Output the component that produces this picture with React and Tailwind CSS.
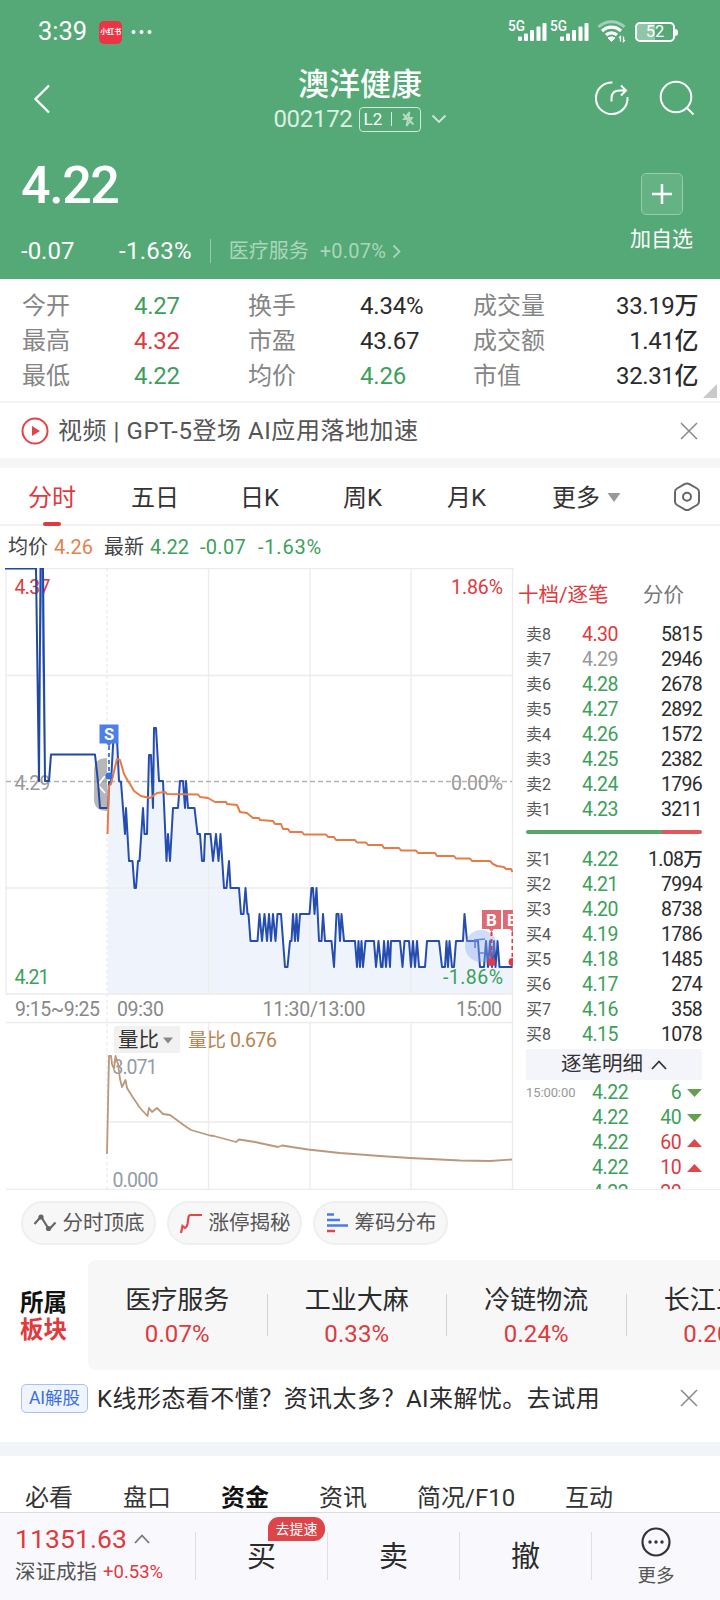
import React from 'react';

const GRID = '#ececec';

const stats = [
  ['今开', '4.27', 'text-[#3d9f5b]', '换手', '4.34%', 'text-[#2b2b2b]', '成交量', '33.19万'],
  ['最高', '4.32', 'text-[#dc3b40]', '市盈', '43.67', 'text-[#2b2b2b]', '成交额', '1.41亿'],
  ['最低', '4.22', 'text-[#3d9f5b]', '均价', '4.26', 'text-[#3d9f5b]', '市值', '32.31亿'],
];

const asks = [
  ['卖8', '4.30', '5815', 'text-[#dc3b40]'],
  ['卖7', '4.29', '2946', 'text-[#999999]'],
  ['卖6', '4.28', '2678', 'text-[#3d9f5b]'],
  ['卖5', '4.27', '2892', 'text-[#3d9f5b]'],
  ['卖4', '4.26', '1572', 'text-[#3d9f5b]'],
  ['卖3', '4.25', '2382', 'text-[#3d9f5b]'],
  ['卖2', '4.24', '1796', 'text-[#3d9f5b]'],
  ['卖1', '4.23', '3211', 'text-[#3d9f5b]'],
];

const bids = [
  ['买1', '4.22', '1.08万', 'text-[#3d9f5b]'],
  ['买2', '4.21', '7994', 'text-[#3d9f5b]'],
  ['买3', '4.20', '8738', 'text-[#3d9f5b]'],
  ['买4', '4.19', '1786', 'text-[#3d9f5b]'],
  ['买5', '4.18', '1485', 'text-[#3d9f5b]'],
  ['买6', '4.17', '274', 'text-[#3d9f5b]'],
  ['买7', '4.16', '358', 'text-[#3d9f5b]'],
  ['买8', '4.15', '1078', 'text-[#3d9f5b]'],
];

const ticks = [
  ['15:00:00', '4.22', '6', false],
  ['', '4.22', '40', false],
  ['', '4.22', '60', true],
  ['', '4.22', '10', true],
  ['', '4.22', '20', true],
];

const sectors = [
  ['医疗服务', '0.07%'],
  ['工业大麻', '0.33%'],
  ['冷链物流', '0.24%'],
  ['长江三角', '0.20%'],
];

const PRE_MARKET = '5,567.5 36,567.5 39,780 40.5,567.5 43,567.5 45,780 49,780 51,753.5 95,753.5 98,781 100,807 108,807';

const PRICE =
  '108,807 109,781 111,781 114,727 116.5,727 119,780 121,781 125,833 126,807 129,860 132.5,860 134.5,887 136,887 138,860 139.5,860 143,807 144.5,833 147,833 149,754 151,754 153,807 154,727 156,727 159,780 163,780 166.5,860 168,833 170,860 173,807 178,807 180,780 183,780 185,807 186,780 188,807 194.5,807 197.5,833 200,833 202,860 204,860 205,833 210.5,833 213,860 216,833 218.5,860 220.5,833 224,887 226.5,887 229,860 230.5,887 239,887 241,913 243.5,913 245.5,887 247.5,913 248.5,913 250.5,940 257.5,940 259.5,913 262,940 264.5,913 267,940 269,913 271,940 273,913 275.5,940 277.5,913 281,913 285,966 287.5,966 290,940 291.5,940 293,913 295,940 296.5,913 298,940 300,913 309.5,913 311.5,887 313,887 314.5,913 316.5,887 319,940 321.5,940 323,913 325,940 331.5,940 334,966 336.5,913 338.5,913 340,940 341.5,913 344,940 355,940 357,966 358.5,940 360,966 361.5,940 363,966 365.5,940 374,940 376,966 378.5,940 381,966 382.5,966 384,940 386,966 388,940 390,966 391,940 400,940 402.5,966 404.5,940 409,940 411,966 413,940 415,966 417,940 419,966 425,966 427,940 439,940 442,966 445,966 446.5,940 448,966 449.5,940 452,966 454,966 456,940 463,940 464.5,913 467,940 478,940 480,966 484,966 486,940 488,966 490,940 492,966 494,940 495.5,966 497.5,940 499.5,966 512.5,966';

const AVERAGE =
  '107.5,833 109,785 111,783 117,758 120,759 124,773 128,780 130,783 134,790 141,795 150,797 157,792 165,791 167,793 198,793.5 200,796 208,797 215,801 226,801 227,803 237,804 240,811 247,812 253,817 259,817 260,819 273,820 275,823 281,823 283,828 288,828 290,831 302,831 304,833.5 326,833.5 328,836 334,836 336,839 355,839 357,841.5 366,841.5 368,844 382,844 384,847 399,847 401,849.5 416,849.5 418,852 435,852 437,855 454,855 456,857.5 470,857.5 472,860 490,860 493,863 497,865 504,866 506,868 511,868 512.5,871';

const VOLUME_RATIO =
  '107,1153 109,1055 111,1055 112,1063 114,1068 115.5,1055 118,1063 120,1078 122,1086 125.5,1079 127,1087 132,1095 140,1107 147.5,1115 149,1107 152,1111 157,1107 163,1113 170,1114 185,1125 191,1129 198,1131 210,1134.5 214,1135 236,1141 239,1138.5 255,1141 278,1146 282,1144.5 308,1148.5 340,1152 380,1155 410,1157 460,1159.5 490,1160 512,1158.5';

function CloseIcon() {
  return (
    <svg width="18" height="18" fill="none" stroke="#888888" strokeWidth="1.5" className="ml-auto">
      <path d="m1 1 16 16M17 1 1 17" />
    </svg>
  );
}

function UpIcon({ className }) {
  return (
    <svg width="16" height="10" fill="none" stroke="currentColor" strokeWidth="1.800" className={className}>
      <path d="m1 9 7-7.500L15 9" />
    </svg>
  );
}

function Signal() {
  return (
    <svg width="40" height="24" viewBox="0 0 40 24" className="overflow-visible text-white">
      <text x="0" y="10.500" fontSize="14.500" fontWeight="500" fill="currentColor" textLength="17" lengthAdjust="spacingAndGlyphs">5G</text>
      <g fill="currentColor">
        <rect x="10" y="16.500" width="4" height="4.500" rx="1" />
        <rect x="16" y="13.500" width="4" height="7.500" rx="1" />
        <rect x="22" y="10" width="4" height="11" rx="1" />
        <rect x="28.500" y="6.500" width="4" height="14.500" rx="1" />
        <rect x="34.500" y="3" width="4" height="18" rx="1" />
      </g>
    </svg>
  );
}

function StatusBar() {
  return (
    <div className="flex h-16 items-center pl-[38px] pr-[42px] text-white">
      <span className="text-[25.5px] leading-none">3:39</span>
      <span className="ml-3 flex h-[23px] w-[23px] items-center justify-center rounded-[5px] bg-[#ee3344]">
        <span className="whitespace-nowrap text-[7px] font-bold leading-none">小红书</span>
      </span>
      <svg width="22" height="6" className="ml-[9px]" fill="white">
        <circle cx="2.500" cy="3" r="2" />
        <circle cx="10.500" cy="3" r="2" />
        <circle cx="18.500" cy="3" r="2" />
      </svg>
      <div className="ml-auto flex items-center">
        <Signal />
        <div className="w-[2px]" />
        <Signal />
        <svg width="30" height="24" viewBox="0 0 30 24" fill="none" stroke="white" className="ml-[7px]">
          <path d="M1.500 7a18.500 18.500 0 0 1 26 0" strokeWidth="3" opacity="0.45" />
          <path d="M5 11a13.500 13.500 0 0 1 19 0" strokeWidth="3.200" />
          <path d="M9 15a8 8 0 0 1 11 0" strokeWidth="3.200" />
          <path d="M11 18q3.500-2.500 7 0l-3.500 3.500z" fill="white" strokeWidth="1" />
          <path d="M23.500 21.500v-5l-1.500 1.500M26.500 16.500v5l1.500-1.500" strokeWidth="1.300" />
        </svg>
        <div className="relative ml-[8px] flex h-[20px] w-[40px] items-center justify-center overflow-hidden rounded-[5px] border-2 border-white">
          <div className="absolute inset-y-0 left-0 w-[18px] bg-white/35" />
          <span className="relative text-[16.5px] leading-none">52</span>
        </div>
        <div className="h-[7px] w-[3px] rounded-r-sm bg-white" />
      </div>
    </div>
  );
}

function Header() {
  return (
    <header className="h-[279px] bg-[#54a977] text-white">
      <StatusBar />
      <div className="grid h-[72px] grid-cols-[140px_1fr_140px]">
        <div className="pl-8 pt-5">
          <svg width="20" height="30" fill="none" stroke="white" strokeWidth="2.400">
            <path d="M17 1.500 3.500 15 17 28.500" />
          </svg>
        </div>
        <div className="flex flex-col items-center">
          <h1 className="mt-[5px] h-8 text-[31px] font-[450] leading-8">澳洋健康</h1>
          <div className="mt-[5px] flex h-[26px] items-center">
            <span className="mr-[6px] text-[24px] leading-none tracking-[-0.3px] text-[#dcefe3]">002172</span>
            <span className="flex h-[25px] w-[62px] items-center rounded border-[1.5px] border-[#cfe8d8] pl-[4px]">
              <span className="text-[17px] font-[450] leading-none">L2</span>
              <span className="ml-[9px] h-[14px] w-px bg-white/80" />
              <svg width="16" height="16" viewBox="0 0 16 16" className="ml-[8px]" fill="none" stroke="#b4dac2" strokeWidth="1.800">
                <path d="M9.500 1 4 8h4L6.500 15l5.500-8H8.500zM3 3l10.500 10.500" />
              </svg>
            </span>
            <svg width="16" height="10" fill="none" stroke="#cfe8d8" strokeWidth="1.800" className="ml-[10px]">
              <path d="m1.500 1.500 6.500 6.500 6.500-6.500" />
            </svg>
          </div>
        </div>
        <div className="flex items-start justify-end gap-[29px] pr-[25px] pt-4">
          <svg width="36" height="36" viewBox="0 0 36 36" fill="none" stroke="white" strokeWidth="2">
            <path d="M18.500 2.500A15.800 15.800 0 1 0 33.500 17" />
            <path d="M17.500 21.500v-3q0-8 8-8h6M27 5.500l5 5-5 5" />
          </svg>
          <svg width="36" height="36" viewBox="0 0 36 36" fill="none" stroke="white" strokeWidth="2">
            <circle cx="17" cy="17" r="15.300" />
            <path d="m28 28 6.500 6.500" />
          </svg>
        </div>
      </div>
      <div className="flex justify-between pl-[21px] pr-[27px]">
        <div>
          <div className="mt-[23px] h-[54px] text-[52px] font-medium leading-[54px] tracking-[-1.4px]">4.22</div>
          <div className="mt-[25px] flex h-[26px] items-center leading-none">
            <span className="w-[98px] text-[24px] font-[450]">-0.07</span>
            <span className="text-[24px] font-[450] tracking-[0.3px]">-1.63%</span>
            <span className="ml-[18px] h-6 w-px bg-white/40" />
            <span className="ml-[18px] text-[20px] text-[#acd6bb]">医疗服务</span>
            <span className="ml-[11px] text-[20px] tracking-[0.2px] text-[#acd6bb]">+0.07%</span>
            <svg width="9" height="15" fill="none" stroke="#acd6bb" strokeWidth="1.800" className="ml-[6px]">
              <path d="m1.500 1.500 6 6-6 6" />
            </svg>
          </div>
        </div>
        <div className="flex flex-col items-center pt-[37px]">
          <span className="flex h-[42px] w-[42px] items-center justify-center rounded-[5px] border-[1.5px] border-[#98ccab] bg-white/10">
            <svg width="22" height="22" stroke="white" strokeWidth="2.500">
              <path d="M11 1v20M1 11h20" />
            </svg>
          </span>
          <span className="mt-[12px] text-[21px] leading-6">加自选</span>
        </div>
      </div>
    </header>
  );
}

function Stats() {
  return (
    <section className="relative h-[124px] border-b-2 border-[#f3f3f3] pl-[22px] pr-[22px] pt-[9px]">
      {stats.map((row) => (
        <div key={row[0]} className="grid h-[35px] grid-cols-[112px_114px_112px_113px_80px_1fr] items-center text-[24px] leading-none text-[#2b2b2b]">
          <span className="text-[#858585]">{row[0]}</span>
          <span className={`${row[2]} font-[450] tracking-[-0.3px]`}>{row[1]}</span>
          <span className="text-[#858585]">{row[3]}</span>
          <span className={`${row[5]} font-[450] tracking-[-0.2px]`}>{row[4]}</span>
          <span className="whitespace-nowrap text-[#858585]">{row[6]}</span>
          <span className="text-right font-[450] tracking-[-0.4px]">{row[7]}</span>
        </div>
      ))}
      <svg width="14" height="14" className="absolute bottom-[3px] right-[3px]">
        <path d="M14 0v14H0z" fill="#c9c9c9" />
      </svg>
    </section>
  );
}

function NewsBar() {
  return (
    <div className="flex h-[55px] items-center pl-[21px] pr-[22px] text-[#555555]">
      <svg width="28" height="28" viewBox="0 0 28 28">
        <circle cx="14" cy="14" r="12.500" fill="none" stroke="#e04348" strokeWidth="2" />
        <path d="m11 9 8 5-8 5z" fill="#e04348" />
      </svg>
      <span className="ml-[9px] text-[24px] leading-none tracking-[0.55px]">视频 | GPT-5登场 AI应用落地加速</span>
      <CloseIcon />
    </div>
  );
}

function ChartTabs() {
  return (
    <nav className="flex h-[58px] items-center border-b-2 border-[#f1f1f1] pl-[28px] pr-[19px] pt-[3px] text-[24px] leading-none text-[#333333]">
      <span className="relative flex h-[55px] w-[103px] items-center text-[#e0393e]">
        分时
        <span className="absolute bottom-[-1px] left-[15px] h-[4px] w-[18px] rounded-sm bg-[#e0393e]" />
      </span>
      <span className="w-[109px]">五日</span>
      <span className="w-[103px]">日K</span>
      <span className="w-[104px]">周K</span>
      <span className="w-[105px]">月K</span>
      <span>更多</span>
      <svg width="14" height="9" className="ml-[7px]"><path d="M0.500 0h13L7 9z" fill="#999999" /></svg>
      <svg width="28" height="30" viewBox="0 0 28 30" fill="none" stroke="#666666" strokeWidth="2" className="mb-[1px] ml-auto">
        <path d="M11.500 2.200q2.500-1.400 5 0l7.500 4.300q2 1.200 2 3.500v9.500q0 2.300-2 3.500l-7.500 4.300q-2.500 1.400-5 0L4 23q-2-1.200-2-3.500V10q0-2.300 2-3.500z" />
        <circle cx="14" cy="14.800" r="4" />
      </svg>
    </nav>
  );
}

function QuoteLine() {
  return (
    <div className="flex h-[42px] items-center pl-[8px] text-[20px] leading-none text-[#3d9f5b]">
      <span className="mr-[6px] text-[#444444]">均价</span>
      <span className="w-[50px] text-[#e2814f]">4.26</span>
      <span className="mr-[6px] text-[#444444]">最新</span>
      <span className="w-[50px]">4.22</span>
      <span className="w-[58px] tracking-[0.3px]">-0.07</span>
      <span className="tracking-[0.8px]">-1.63%</span>
    </div>
  );
}

function BuyMarker({ x }) {
  return (
    <g>
      <path d={`M${x - 9.5} 909h19v19h-7l-2.500 3-2.500-3h-7z`} fill="#df6a73" />
      <text x={x} y="925" fontSize="17" fontWeight="700" fill="white" textAnchor="middle">B</text>
      <path d={`M${x} 931v26`} stroke="#cf4054" strokeWidth="2" strokeDasharray="4 3" />
      <circle cx={x} cy="961" r="4" fill="#e23a48" />
    </g>
  );
}

function Chart() {
  return (
    <svg width="514" height="622" viewBox="0 567 514 622" className="shrink-0" fontSize="19.500">
      <defs>
        <clipPath id="plot"><rect x="0" y="566" width="513" height="623" /></clipPath>
      </defs>
      <polygon points={`${PRICE} 512.5,993 107.5,993`} fill="#eff4fc" />
      <g stroke={GRID} strokeWidth="1.300">
        <path d="M6 567.500H514M6 674.500H512M6 887H512M6 993H512M6 1021.500H512M107 1121H512" />
        <path d="M6 567V993M208.500 567V993M310 567V993M411 567V993M512.500 567V1188" />
        <path d="M208.500 1021V1188M310 1021V1188M411 1021V1188" />
        <path d="M107 567V1188" strokeDasharray="3 3" />
        <path d="M6 1188.500H514" />
      </g>
      <path d="M6 780.500H512" stroke="#b3b3b3" strokeWidth="1.500" strokeDasharray="5 3" />

      <text x="14.500" y="593" fill="#dc3b40" textLength="36">4.37</text>
      <text x="14.500" y="789" fill="#999999" textLength="36">4.29</text>
      <text x="14.500" y="982.500" fill="#3d9f5b" textLength="35">4.21</text>
      <text x="503" y="593" fill="#dc3b40" textAnchor="end" textLength="52">1.86%</text>
      <text x="503" y="789" fill="#999999" textAnchor="end" textLength="52">0.00%</text>

      <path d="M107 757q-13 0-13 12v29q0 12 13 12z" fill="#999999" opacity="0.7" />
      <path d="m105 775-7 9 7 8" fill="none" stroke="white" strokeWidth="1.800" />

      <g fill="none" strokeLinejoin="round" clipPath="url(#plot)">
        <path d="M40.500 568h3l1 210z" fill="#7f9df0" />
        <polyline points={PRE_MARKET} stroke="#2148a5" strokeWidth="2" />
        <polyline points={PRICE} stroke="#254db0" strokeWidth="2" />
        <polyline points={AVERAGE} stroke="#e87a48" strokeWidth="2" />
      </g>

      {/* trade markers */}
      <path d="M99.500 723.500h19v19h-7l-2.500 3-2.500-3h-7z" fill="#4d7fe8" />
      <text x="109" y="739" fontSize="16.500" fontWeight="700" fill="white" textAnchor="middle">S</text>
      <path d="M109 745v28" stroke="#4d7fe8" strokeWidth="2" strokeDasharray="4 3" />
      <circle cx="109" cy="775" r="3.500" fill="#3a6fe0" />
      <circle cx="481" cy="945" r="16" fill="#8ca8ed" opacity="0.4" />
      <path d="M475 947v-8l10-1M480 952h5" fill="none" stroke="#5d85ec" strokeWidth="1.700" />
      <g clipPath="url(#plot)">
        <BuyMarker x={491.5} />
        <BuyMarker x={512.5} />
      </g>
      <text x="503" y="982.500" fill="#3d9f5b" textAnchor="end" textLength="60">-1.86%</text>

      <g fill="#888888">
        <text x="15" y="1014.500" textLength="85">9:15~9:25</text>
        <text x="117" y="1014.500" textLength="47">09:30</text>
        <text x="314" y="1014.500" textAnchor="middle" textLength="103">11:30/13:00</text>
        <text x="502" y="1014.500" textAnchor="end" textLength="46">15:00</text>
      </g>

      <rect x="114" y="1025" width="66" height="27" rx="2" fill="#f1f1f1" />
      <text x="118" y="1046" fontSize="20.500" fill="#333333">量比</text>
      <path d="M163 1036.500h10l-5 6z" fill="#888888" />
      <text x="188" y="1045.500" fontSize="19" fill="#b98250">量比</text>
      <text x="230" y="1045.500" fill="#b98250" textLength="47">0.676</text>
      <text x="112.500" y="1072.500" fill="#939ca6" textLength="45">3.071</text>
      <text x="112.500" y="1185.500" fill="#939ca6" textLength="46">0.000</text>
      <polyline points={VOLUME_RATIO} fill="none" stroke="#bd977a" strokeWidth="1.800" strokeLinejoin="round" />
    </svg>
  );
}

function BookRow({ row }) {
  return (
    <div className="flex h-[25px] items-center leading-none">
      <span className="w-[56px] text-[16px] text-[#555555]">{row[0]}</span>
      <span className={`${row[3]} text-[19.5px] tracking-[-0.5px]`}>{row[1]}</span>
      <span className="ml-auto text-[19.5px] font-[450] tracking-[-0.7px] text-[#2b2b2b]">{row[2]}</span>
    </div>
  );
}

function OrderBook() {
  return (
    <aside className="h-[622px] flex-1 overflow-hidden border-b border-[#ececec] pr-[18px] pl-[12px]">
      <div className="-ml-[8px] flex h-[54px] items-center text-[20.5px] leading-none">
        <span className="w-[125px] text-[#e0393e]">十档/逐笔</span>
        <span className="text-[#777777]">分价</span>
      </div>
      {asks.map((row) => <BookRow key={row[0]} row={row} />)}
      <div className="my-[8px] flex h-[4px] overflow-hidden rounded-full">
        <span className="w-[77%] bg-[#53a76c]" />
        <span className="flex-1 bg-[#e2575a]" />
      </div>
      <div className="h-[5px]" />
      {bids.map((row) => <BookRow key={row[0]} row={row} />)}
      <div className="mt-[2px] flex h-[31px] items-center justify-center bg-[#f4f5fa] text-[20.5px] leading-none text-[#333333]">
        逐笔明细
        <UpIcon className="ml-[8px]" />
      </div>
      {ticks.map((t, i) => (
        <div key={i} className="flex h-[25px] items-center leading-none">
          <span className="w-[66px] text-[13px] tracking-[-0.1px] text-[#999999]">{t[0]}</span>
          <span className="text-[19.5px] tracking-[-0.4px] text-[#3d9f5b]">{t[1]}</span>
          <span className={`${t[3] ? 'text-[#dc3b40]' : 'text-[#3d9f5b]'} ml-auto text-[19.5px] tracking-[-0.6px]`}>{t[2]}</span>
          <svg width="15" height="8" className="ml-[6px]">
            {t[3] ? <path d="M0 8h15L7.500 0z" fill="#e0474a" /> : <path d="M0 0h15L7.500 8z" fill="#649f4c" />}
          </svg>
        </div>
      ))}
    </aside>
  );
}

function Chip({ label, children }) {
  return (
    <span className="flex h-[44px] w-[135px] items-center justify-center rounded-full border-2 border-[#efefef] bg-[#f7f7f7] text-[20.5px] leading-none text-[#555555]">
      <svg width="24" height="24" viewBox="0 0 24 24" fill="none" strokeWidth="2.200" className="mr-[6px]">{children}</svg>
      {label}
    </span>
  );
}

function Chips() {
  return (
    <div className="flex gap-[11px] pl-[21px] pt-[11px]">
      <Chip label="分时顶底">
        <path d="M1.500 13 8 5.500l8 13 6.500-7" stroke="#666666" />
        <circle cx="8" cy="6" r="2.600" fill="#666666" />
        <circle cx="15.500" cy="17.500" r="2.600" fill="#666666" />
      </Chip>
      <Chip label="涨停揭秘">
        <path d="M2 22 3.500 15l2.500 2q2-1 2.500-4l1-7q.300-2 2.500-2H23" stroke="#e0474a" />
      </Chip>
      <Chip label="筹码分布">
        <path d="M2 3.500h7M2 9h13M2 14.500h21" stroke="#4a7bea" strokeWidth="2.500" />
        <path d="M2 20h8" stroke="#e0474a" strokeWidth="2.500" />
      </Chip>
    </div>
  );
}

function Sectors() {
  return (
    <section className="mt-[15px] flex h-[110px] overflow-hidden">
      <div className="flex w-[88px] shrink-0 flex-col justify-center pl-[20px] pt-[3px] text-[23.5px] font-bold leading-[27px]">
        <span className="text-[#111111]">所属</span>
        <span className="text-[#e0393e]">板块</span>
      </div>
      <div className="flex shrink-0 items-center rounded-l-lg bg-[#f7f7f7]">
        {sectors.map(([name, pct], i) => (
          <div key={name} className="flex items-center">
            {i > 0 && <span className="h-[42px] w-px bg-[#d2d2d2]" />}
            <div className="flex w-[178.5px] flex-col items-center pt-[4px]">
              <span className="text-[26px] leading-[34px] text-[#2b2b2b]">{name}</span>
              <span className="text-[24px] leading-[34px] tracking-[0.1px] text-[#e0393e]">{pct}</span>
            </div>
          </div>
        ))}
      </div>
    </section>
  );
}

function AiBanner() {
  return (
    <div className="flex h-[72px] items-start pl-[21px] pr-[22px] pt-[14px]">
      <span className="flex h-[29px] w-[67px] items-center justify-center rounded-[5px] border-[1.5px] border-[#a8c0f3] bg-[#eff4ff] pt-px text-[17.5px] leading-none text-[#3a6fe0]">AI解股</span>
      <span className="ml-[9px] mt-px whitespace-nowrap text-[24px] leading-[29px] tracking-[0.45px] text-[#2b2b2b]">K线形态看不懂？资讯太多？AI来解忧。去试用</span>
      <div className="ml-auto mt-[5px]">
        <CloseIcon />
      </div>
    </div>
  );
}

function SectionTabs() {
  return (
    <nav className="flex h-[56px] items-end pl-[25px] text-[24px] leading-[28px] text-[#333333]">
      <span className="w-[98px]">必看</span>
      <span className="w-[98px]">盘口</span>
      <span className="w-[98px] font-bold text-[#111111]">资金</span>
      <span className="w-[98px]">资讯</span>
      <span className="w-[148px]">简况/F10</span>
      <span>互动</span>
    </nav>
  );
}

function TradeButton({ label, badge }) {
  return (
    <div className="relative flex h-[48px] w-[132px] items-center justify-center border-l border-[#dedee4] pt-[3px] text-[29px] leading-none text-[#2b2b2b]">
      {label}
      {badge && (
        <span className="absolute -top-[15px] left-[72px] flex h-[24px] w-[57px] items-center justify-center rounded-[11px] rounded-bl-none bg-[#de4548] text-[14px] text-white">{badge}</span>
      )}
    </div>
  );
}

function BottomBar() {
  return (
    <footer className="flex h-[88px] border-t border-[#dcdce0] bg-[#f9f9fd] pt-[19px]">
      <div className="w-[195px] shrink-0 pl-[15px] leading-none">
        <div className="-mt-[7px] flex h-[28px] items-center text-[26.5px] tracking-[0.1px] text-[#e0393e]">
          11351.63
          <UpIcon className="ml-[7px] text-[#777777]" />
        </div>
        <div className="mt-[7px] flex h-[24px] items-center">
          <span className="text-[20.5px] text-[#555555]">深证成指</span>
          <span className="ml-[6px] text-[18.5px] text-[#e0393e]">+0.53%</span>
        </div>
      </div>
      <TradeButton label="买" badge="去提速" />
      <TradeButton label="卖" />
      <TradeButton label="撤" />
      <div className="flex h-[48px] flex-1 flex-col items-center border-l border-[#dedee4]">
        <svg width="30" height="30" className="-mt-[5px] shrink-0" fill="#333333">
          <circle cx="15" cy="15" r="13.500" fill="none" stroke="#333333" strokeWidth="2.200" />
          <circle cx="9" cy="15" r="1.700" />
          <circle cx="15" cy="15" r="1.700" />
          <circle cx="21" cy="15" r="1.700" />
        </svg>
        <span className="mt-[10px] text-[18.5px] leading-none text-[#555555]">更多</span>
      </div>
    </footer>
  );
}

export default function App() {
  return (
    <div className="h-[1600px] w-[720px] overflow-hidden bg-white font-[Roboto,'Noto_Sans_CJK_SC',sans-serif]">
      <Header />
      <Stats />
      <NewsBar />
      <div className="h-[10px] bg-[#f6f6f6]" />
      <ChartTabs />
      <QuoteLine />
      <main className="flex">
        <Chart />
        <OrderBook />
      </main>
      <Chips />
      <Sectors />
      <AiBanner />
      <div className="h-[14px] bg-[#f1f5f8]" />
      <SectionTabs />
      <BottomBar />
    </div>
  );
}
